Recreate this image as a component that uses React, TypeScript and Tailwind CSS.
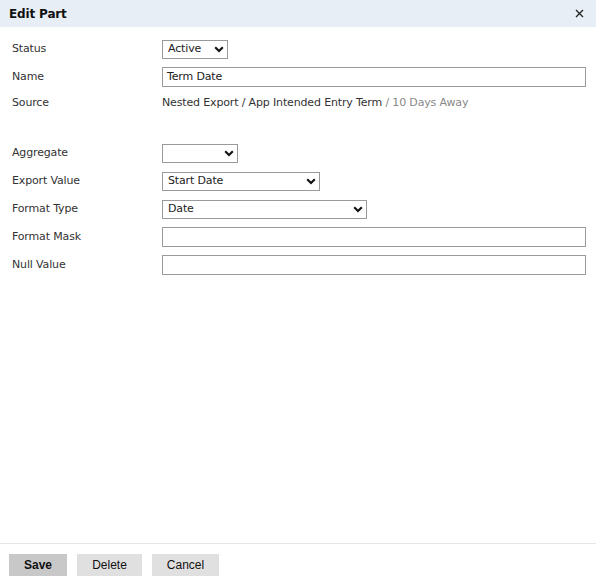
import React from "react";

const Chevron = () => (
  <svg width="10" height="7" viewBox="0 0 10 7" className="shrink-0">
    <path d="M1.2 1.2 L5 5 L8.8 1.2" fill="none" stroke="#111" strokeWidth="2.1" />
  </svg>
);

function Select({ value, width }: { value: string; width: string }) {
  return (
    <div
      className={`${width} h-[19px] border border-[#9a9a9a] bg-white flex items-center justify-between pl-[5px] pr-[3px] text-[#222]`}
    >
      <span>{value}</span>
      <Chevron />
    </div>
  );
}

function Input({ value }: { value?: string }) {
  return (
    <div className="flex-1 h-[20px] border border-[#9a9a9a] bg-white flex items-center pl-[4px] text-[#222]">
      {value}
    </div>
  );
}

function Row({ label, children, h = "h-[28px]" }: { label: string; children: React.ReactNode; h?: string }) {
  return (
    <div className={`flex items-center ${h}`}>
      <div className="w-[162px] pl-[12px] text-[#333] shrink-0">{label}</div>
      <div className="flex-1 flex items-center">{children}</div>
    </div>
  );
}

export default function App() {
  return (
    <div
      className="w-[596px] h-[584px] bg-white flex flex-col text-[11px] tracking-[-0.15px]"
      style={{ fontFamily: '"DejaVu Sans", Verdana, sans-serif' }}
    >
      <div className="h-[27px] bg-[#e8eef6] flex items-center justify-between pl-[9px] pr-[12px]">
        <span className="font-bold text-[#111] text-[12px]">Edit Part</span>
        <svg width="9" height="9" viewBox="0 0 9 9">
          <path d="M1 1 L8 8 M8 1 L1 8" stroke="#222" strokeWidth="1.3" />
        </svg>
      </div>
      <div className="flex-1 pt-[8px] pr-[10px]">
        <Row label="Status">
          <Select value="Active" width="w-[66px]" />
        </Row>
        <Row label="Name">
          <Input value="Term Date" />
        </Row>
        <Row label="Source" h="h-[24px]">
          <span className="text-[#333]">
            Nested Export / App Intended Entry Term <span className="text-[#888]">/ 10 Days Away</span>
          </span>
        </Row>
        <div className="h-[24px]" />
        <Row label="Aggregate">
          <Select value="" width="w-[76px]" />
        </Row>
        <Row label="Export Value">
          <Select value="Start Date" width="w-[158px]" />
        </Row>
        <Row label="Format Type">
          <Select value="Date" width="w-[205px]" />
        </Row>
        <Row label="Format Mask">
          <Input />
        </Row>
        <Row label="Null Value">
          <Input />
        </Row>
      </div>
      <div
        className="border-t border-[#e6e6e6] pt-[10px] pb-[8px] pl-[9px] flex gap-[10px] text-[12px] text-[#111] tracking-normal"
        style={{ fontFamily: '"Liberation Sans", Arial, sans-serif' }}
      >
        <div className="h-[22px] w-[58px] bg-[#c8c8c8] flex items-center justify-center font-bold">Save</div>
        <div className="h-[22px] w-[65px] bg-[#e0e0e0] flex items-center justify-center">Delete</div>
        <div className="h-[22px] w-[67px] bg-[#e0e0e0] flex items-center justify-center">Cancel</div>
      </div>
    </div>
  );
}
